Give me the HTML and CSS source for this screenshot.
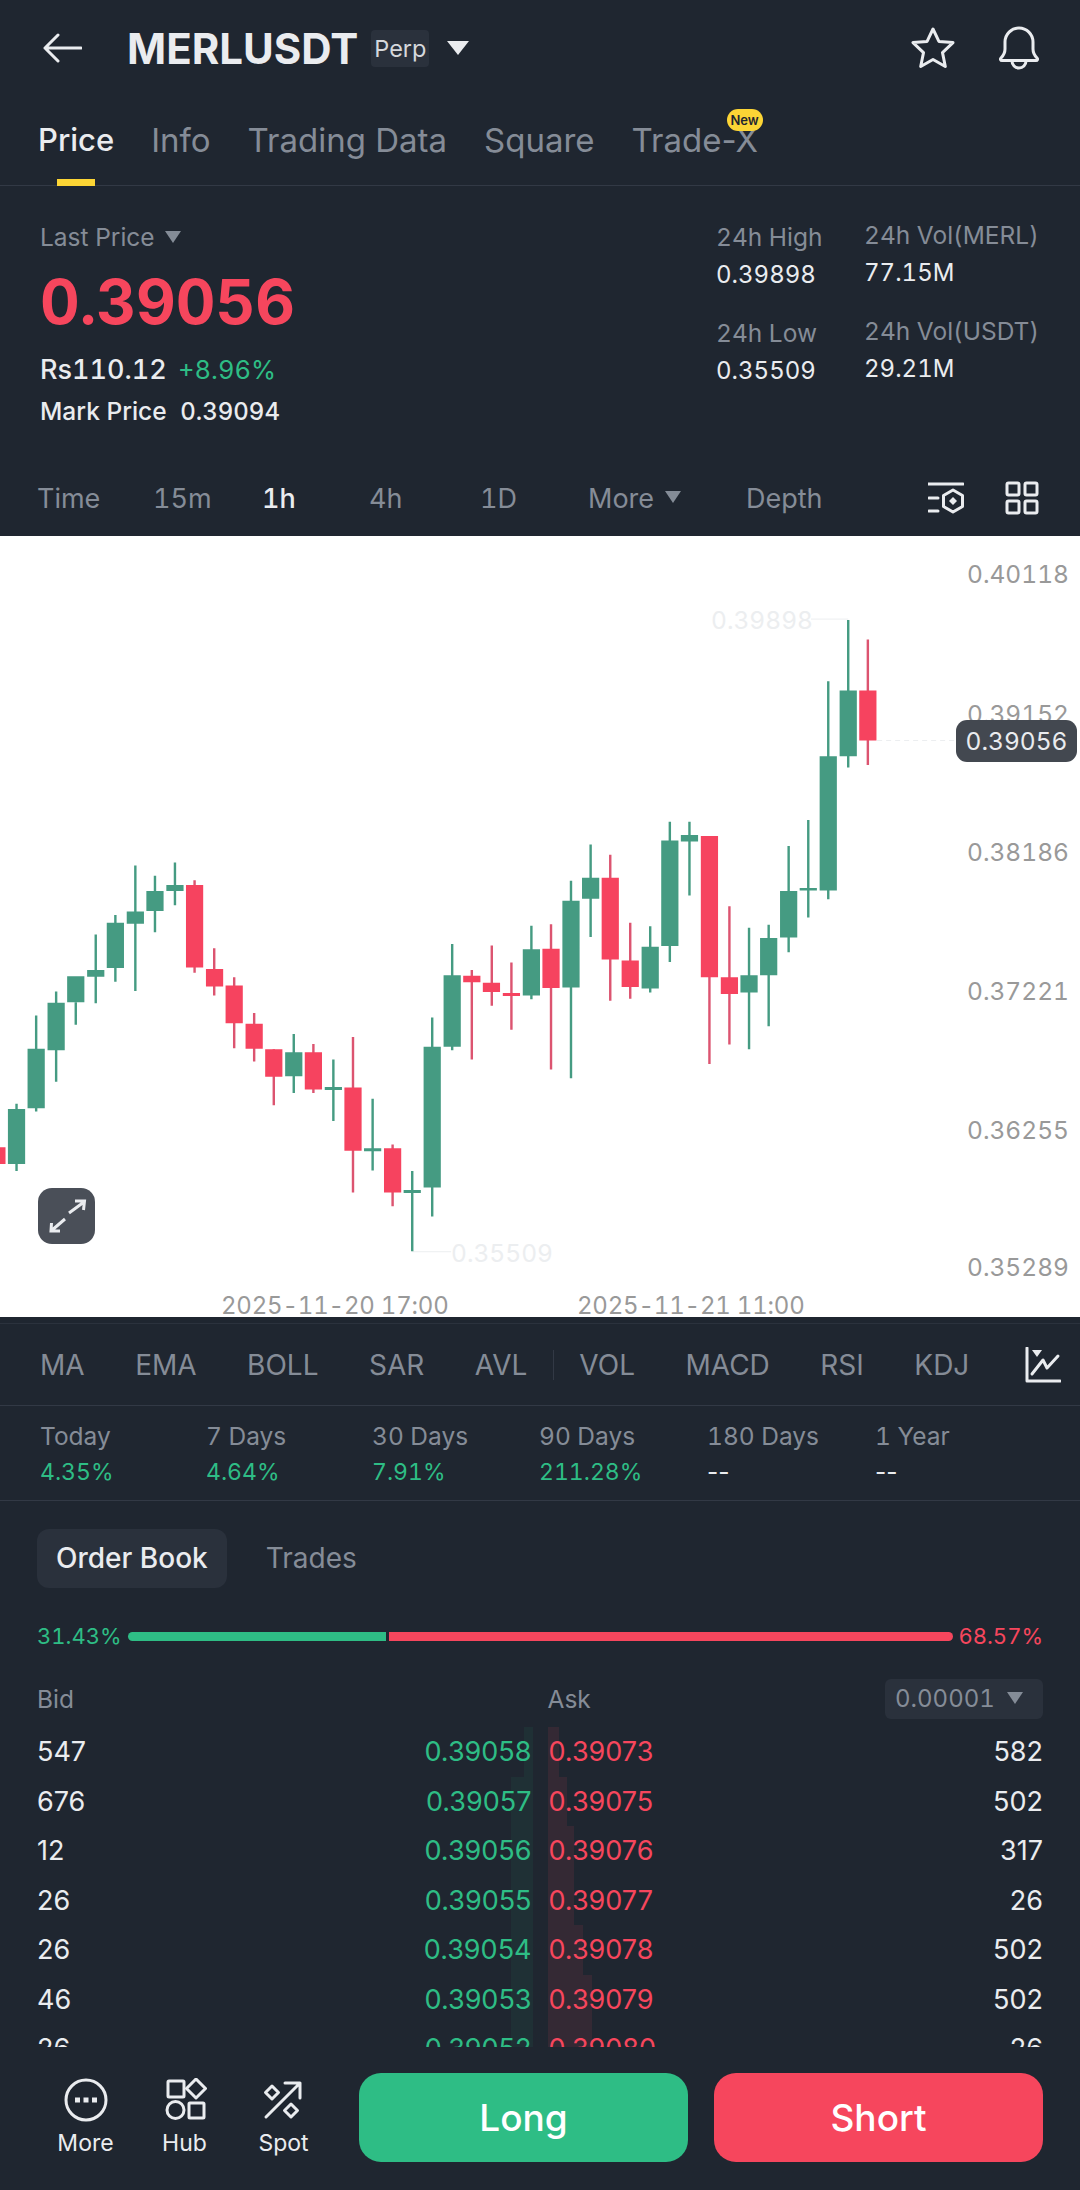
FILE: index.html
```html
<!DOCTYPE html>
<html lang="en">
<head>
  <meta charset="UTF-8" />
  <meta name="viewport" content="width=device-width, initial-scale=1.0"/>
  <title>MERLUSDT Perp</title>
  <link rel="stylesheet" href="styles.css">
</head>
<body>
  <header class="topbar">
    <svg class="icon back" width="40" height="30" viewBox="0 0 40 30"><path d="M39 15H3M16 2L3 15l13 13"/></svg>
    <span class="symbol">MERLUSDT</span>
    <span class="perp">Perp</span>
    <span class="tri tri-white"></span>
    <svg class="icon star" width="44" height="44" viewBox="0 0 44 44"><path d="M22 3l5.900 12.400 14.100 1.200-10.500 10 2.800 13.900L22 33.500 9.700 40.500l2.800-13.900L2 16.600l14.100-1.200z"/></svg>
    <svg class="icon bell" width="44" height="46" viewBox="0 0 44 46"><path d="M4 33c3-3 4-5 4-9v-7a14 14 0 0 1 28 0v7c0 4 1 6 4 9 1 1 .5 2.500-1 2.500H5c-1.500 0-2-1.500-1-2.500z"/><path d="M15 36a7 7 0 0 0 14 0"/></svg>
  </header>

  <nav class="tabs">
    <a class="tab active">Price</a>
    <a class="tab">Info</a>
    <a class="tab">Trading Data</a>
    <a class="tab">Square</a>
    <a class="tab">Trade-X<span class="new">New</span></a>
  </nav>

  <section class="summary">
    <div class="last">
      <div class="last-label">Last Price <span class="tri tri-grey"></span></div>
      <div class="last-price">0.39056</div>
      <div class="last-fiat">Rs110.12 <span class="green">+8.96%</span></div>
      <div class="last-mark">Mark Price <span class="mark-val">0.39094</span></div>
    </div>
    <div class="stats">
      <div class="stat-col">
        <p class="stat-label">24h High</p>
        <p class="stat-val">0.39898</p>
        <p class="stat-label lower">24h Low</p>
        <p class="stat-val">0.35509</p>
      </div>
      <div class="stat-col shift">
        <p class="stat-label">24h Vol(MERL)</p>
        <p class="stat-val">77.15M</p>
        <p class="stat-label lower">24h Vol(USDT)</p>
        <p class="stat-val">29.21M</p>
      </div>
    </div>
  </section>

  <div class="frames">
    <span>Time</span>
    <span>15m</span>
    <span class="on">1h</span>
    <span>4h</span>
    <span>1D</span>
    <span>More <i class="tri tri-grey"></i></span>
    <span>Depth</span>
    <svg class="icon frame-icon" width="36" height="34" viewBox="0 0 36 34"><path d="M0 3h35M1 17h9M1 30h9"/><path d="M25 9l9.500 5.500v11L25 31l-9.500-5.500v-11z"/><path class="solid" d="M25 16l4 4-4 4-4-4z"/></svg>
    <svg class="icon grid-icon" width="34" height="34" viewBox="0 0 34 34"><rect x="2" y="2" width="12" height="12" rx="1.500"/><rect x="20" y="2" width="12" height="12" rx="1.500"/><rect x="2" y="20" width="12" height="12" rx="1.500"/><rect x="20" y="20" width="12" height="12" rx="1.500"/></svg>
  </div>

  <section class="chart">
    <svg class="candles" width="1080" height="800" viewBox="0 0 3136 1568" preserveAspectRatio="none">
      <path class="guide" d="M2355 155H2463M1197 1395H1310"/>
      <path class="guide dashed" d="M2547 393H2776"/>
      <path class="wick up" d="M48 1105V1237M105 932V1120M163 885V1062M220 906V950M278 773V908M335 735V866M393 638V884M450 658V769M508 632V716M853 968V1084M968 1018V1139M1082 1095V1236M1197 1237V1394M1255 936V1326M1313 792V1000M1543 756V900M1658 668V1055M1715 597V778M1888 757V887M1945 552V827M2002 552V697M2175 760V998M2232 754V953M2290 600V808M2347 549V740M2405 277V704M2463 157V446"/>
      <path class="wick down" d="M565 667V848M622 800V893M680 857V996M738 927V1022M795 998V1108M910 988V1084M1025 974V1279M1140 1185V1306M1370 843V1018M1428 795V913M1485 828V960M1600 753V1038M1772 617V903M1830 750V899M2060 580V1027M2118 718V989M2520 195V441"/>
      <path class="body up" d="M23 1115h50v108h-50zM80 997h50v117h-50zM138 907h50v93h-50zM195 855h50v51h-50zM253 843h50v13h-50zM310 750h50v89h-50zM368 728h50v24h-50zM425 688h50v39h-50zM483 676h50v12h-50zM828 1004h50v47h-50zM943 1072h50v6h-50zM1057 1192h50v6h-50zM1172 1274h50v6h-50zM1230 993h50v276h-50zM1288 853h50v140h-50zM1518 802h50v91h-50zM1633 707h50v170h-50zM1690 662h50v41h-50zM1863 797h50v82h-50zM1920 589h50v207h-50zM1977 578h50v13h-50zM2150 853h50v34h-50zM2207 780h50v73h-50zM2265 688h50v91h-50zM2322 682h50v5h-50zM2380 424h50v263h-50zM2438 295h50v129h-50z"/>
      <path class="body down" d="M-34 1190h50v33h-50zM540 676h50v162h-50zM598 841h50v34h-50zM655 873h50v74h-50zM713 948h50v49h-50zM770 998h50v54h-50zM885 1004h50v73h-50zM1000 1073h50v124h-50zM1115 1192h50v87h-50zM1345 854h50v13h-50zM1402 868h50v18h-50zM1460 888h50v6h-50zM1575 801h50v77h-50zM1747 662h50v160h-50zM1805 824h50v52h-50zM2035 580h50v277h-50zM2093 857h50v33h-50zM2495 295h50v98h-50z"/>
    </svg>

    <span class="axis y-40118">0.40118</span>
    <span class="axis y-39152">0.39152</span>
    <span class="axis y-38186">0.38186</span>
    <span class="axis y-37221">0.37221</span>
    <span class="axis y-36255">0.36255</span>
    <span class="axis y-35289">0.35289</span>
    <span class="now-price">0.39056</span>
    <span class="peak peak-high">0.39898</span>
    <span class="peak peak-low">0.35509</span>
    <span class="date date-a">2025-11-20 17:00</span>
    <span class="date date-b">2025-11-21 11:00</span>

    <button class="expand">
      <svg width="57" height="56" viewBox="0 0 57 56"><path d="M31 25l15-11M37 13h9.500l-1 9M27 31L13 43M13.500 35L13 43h9"/></svg>
    </button>
  </section>

  <div class="indicators">
    <span>MA</span>
    <span>EMA</span>
    <span>BOLL</span>
    <span>SAR</span>
    <span>AVL</span>
    <i class="sep"></i>
    <span>VOL</span>
    <span>MACD</span>
    <span>RSI</span>
    <span>KDJ</span>
    <svg class="icon ind-icon" width="36" height="36" viewBox="0 0 36 36"><path d="M2 1v33h33"/><path d="M7 27l11-14 4 8 11-12"/><path class="solid" d="M7 3h10l-5 7z"/></svg>
  </div>

  <div class="periods">
    <div class="period"><p>Today</p><b class="green">4.35%</b></div>
    <div class="period"><p>7 Days</p><b class="green">4.64%</b></div>
    <div class="period"><p>30 Days</p><b class="green">7.91%</b></div>
    <div class="period"><p>90 Days</p><b class="green">211.28%</b></div>
    <div class="period"><p>180 Days</p><b class="none">--</b></div>
    <div class="period"><p>1 Year</p><b class="none">--</b></div>
  </div>

  <section class="book">
    <div class="book-tabs">
      <span class="book-tab active">Order Book</span>
      <span class="book-tab">Trades</span>
    </div>

    <div class="ratio">
      <span class="green">31.43%</span>
      <div class="ratio-bar">
        <i class="ratio-bid"></i>
        <i class="ratio-ask"></i>
      </div>
      <span class="red">68.57%</span>
    </div>

    <div class="book-head">
      <div class="half"><span>Bid</span></div>
      <div class="half">
        <span class="ask-label">Ask</span>
        <span class="tick">0.00001 <i class="tri tri-grey"></i></span>
      </div>
    </div>

    <div class="rows">
      <div class="row">
        <div class="half"><i class="depth depth-bid" style="width:9px"></i><span>547</span><span class="green">0.39058</span></div>
        <div class="half"><i class="depth depth-ask" style="width:11px"></i><span class="red">0.39073</span><span>582</span></div>
      </div>
      <div class="row">
        <div class="half"><i class="depth depth-bid" style="width:22px"></i><span>676</span><span class="green">0.39057</span></div>
        <div class="half"><i class="depth depth-ask" style="width:19px"></i><span class="red">0.39075</span><span>502</span></div>
      </div>
      <div class="row">
        <div class="half"><i class="depth depth-bid" style="width:22px"></i><span>12</span><span class="green">0.39056</span></div>
        <div class="half"><i class="depth depth-ask" style="width:26px"></i><span class="red">0.39076</span><span>317</span></div>
      </div>
      <div class="row">
        <div class="half"><i class="depth depth-bid" style="width:22px"></i><span>26</span><span class="green">0.39055</span></div>
        <div class="half"><i class="depth depth-ask" style="width:26px"></i><span class="red">0.39077</span><span>26</span></div>
      </div>
      <div class="row">
        <div class="half"><i class="depth depth-bid" style="width:22px"></i><span>26</span><span class="green">0.39054</span></div>
        <div class="half"><i class="depth depth-ask" style="width:35px"></i><span class="red">0.39078</span><span>502</span></div>
      </div>
      <div class="row">
        <div class="half"><i class="depth depth-bid" style="width:22px"></i><span>46</span><span class="green">0.39053</span></div>
        <div class="half"><i class="depth depth-ask" style="width:44px"></i><span class="red">0.39079</span><span>502</span></div>
      </div>
      <div class="row">
        <div class="half"><i class="depth depth-bid" style="width:22px"></i><span>26</span><span class="green">0.39052</span></div>
        <div class="half"><i class="depth depth-ask" style="width:44px"></i><span class="red">0.39080</span><span>26</span></div>
      </div>
    </div>
  </section>

  <footer class="actions">
    <div class="action">
      <svg class="icon" width="44" height="44" viewBox="0 0 44 44"><circle cx="22" cy="22" r="20"/><path class="solid" d="M11 19.500h5v5h-5zM19.500 19.500h5v5h-5zM28 19.500h5v5h-5z"/></svg>
      <span>More</span>
    </div>
    <div class="action">
      <svg class="icon" width="44" height="44" viewBox="0 0 44 44"><rect x="5" y="3" width="16" height="16" rx="1"/><path d="M33 1l9.500 9.500L33 20l-9.500-9.500z"/><circle cx="12.500" cy="32" r="8.500"/><rect x="26" y="25" width="15" height="15" rx="1"/></svg>
      <span>Hub</span>
    </div>
    <div class="action">
      <svg class="icon" width="44" height="44" viewBox="0 0 44 44"><path d="M4 39L38 5M23 5h15v15"/><path d="M10 8l6.500 6.500L10 21l-6.500-6.500zM29 26l6.500 6.500L29 39l-6.500-6.500z"/></svg>
      <span>Spot</span>
    </div>
    <button class="trade long">Long</button>
    <button class="trade short">Short</button>
  </footer>
</body>
</html>
```

FILE: styles.css
```css
* {
  box-sizing: border-box;
}

html,
body {
  margin: 0;
  padding: 0;
}

body {
  width: 1080px;
  height: 2190px;
  overflow: hidden;
  background: #1f2630;
  color: #eaecef;
  font-family: Inter, "Noto Sans", sans-serif;
  font-variant-numeric: tabular-nums;
  display: flex;
  flex-direction: column;
}

p {
  margin: 0;
}

i {
  font-style: normal;
}

.green {
  color: #2ebd85;
}

.red {
  color: #f6465d;
}

.icon {
  fill: none;
  stroke: #eaecef;
  stroke-width: 3;
  stroke-linejoin: round;
  stroke-linecap: round;
  flex: none;
}

.icon .solid {
  fill: #eaecef;
  stroke: none;
}

.tri {
  display: inline-block;
  width: 0;
  height: 0;
  border-style: solid;
  border-color: transparent;
  border-width: 12px 8px 0;
}

.tri-grey {
  border-top-color: #848c97;
}

.tri-white {
  border-width: 14px 11px 0;
  border-top-color: #eaecef;
}

/* header */
.topbar {
  height: 96px;
  padding: 0 39px 0 42px;
  display: flex;
  align-items: center;
}

.symbol {
  margin-left: 45px;
  font-size: 42px;
  font-weight: 700;
}

.perp {
  margin-left: 13px;
  height: 37px;
  line-height: 37px;
  padding: 0 3px;
  border-radius: 4px;
  background: #2a313c;
  color: #d5d8dc;
  font-size: 23.500px;
}

.topbar .tri {
  margin-left: 18px;
}

.star {
  margin-left: auto;
}

.bell {
  margin-left: 42px;
}

.tabs {
  height: 90px;
  padding: 28px 0 0 38px;
  display: flex;
  gap: 37px;
  border-bottom: 1px solid #323945;
}

.tab {
  position: relative;
  height: 32px;
  line-height: 32px;
  font-size: 33px;
  font-variant-numeric: normal;
  color: #858c97;
}

.tab.active {
  font-size: 31px;
  font-weight: 500;
  color: #eaecef;
}

.tab.active::after {
  content: "";
  position: absolute;
  left: 19px;
  top: 55px;
  width: 38px;
  height: 7px;
  background: #fcd535;
}

.new {
  position: absolute;
  left: 95px;
  top: -15px;
  width: 36px;
  height: 22px;
  line-height: 22px;
  border-radius: 11px;
  background: #fcd535;
  color: #1f2630;
  font-size: 13px;
  font-weight: 600;
  text-align: center;
}

/* price summary */
.summary {
  height: 274px;
  padding-top: 36px;
  display: flex;
  justify-content: space-between;
}

.last {
  padding-left: 40px;
}

.last-label {
  line-height: 30px;
  font-size: 24.500px;
  color: #858c97;
}

.last-label .tri {
  margin-left: 4px;
  vertical-align: 3px;
}

.last-price {
  margin-top: 15px;
  line-height: 70px;
  font-size: 61.500px;
  font-weight: 700;
  color: #f6465d;
}

.last-fiat {
  margin-top: 16px;
  line-height: 34px;
  font-size: 27px;
  font-weight: 500;
}

.last-fiat .green {
  font-size: 25.500px;
  font-weight: 400;
  margin-left: 4px;
}

.last-mark {
  margin-top: 9px;
  line-height: 30px;
  font-size: 24.500px;
  font-weight: 500;
}

.mark-val {
  margin-left: 7px;
  font-size: 24px;
}

.stats {
  width: 364px;
  display: flex;
}

.stat-col {
  width: 148px;
}

.stat-col.shift {
  margin-top: -2px;
  width: 216px;
}

.stat-label {
  line-height: 30px;
  font-size: 24.500px;
  color: #858c97;
}

.stat-label.lower {
  margin-top: 28px;
}

.stat-val {
  margin-top: 8px;
  line-height: 30px;
  font-size: 24px;
}

/* time frames */
.frames {
  height: 76px;
  padding-left: 37px;
  display: grid;
  grid-template-columns: 116px 109px 107px 111px 108px 158px 182px 77px 33px;
  align-items: center;
  font-size: 27px;
  color: #858c97;
}

.frames .on {
  color: #eaecef;
  font-weight: 500;
}

.frames .tri {
  margin-left: 4px;
  vertical-align: 5px;
}

/* chart */
.chart {
  position: relative;
  height: 781px;
  background: #fff;
  overflow: hidden;
  flex: none;
}

.candles {
  position: absolute;
  left: 0;
  top: 4px;
}

.wick {
  fill: none;
  stroke-width: 7;
}

.wick.up {
  stroke: #459b82;
}

.wick.down {
  stroke: #dc5470;
}

.body.up {
  fill: #459b82;
}

.body.down {
  fill: #f6435f;
}

.guide {
  fill: none;
  stroke: #eceef0;
  stroke-width: 1;
  vector-effect: non-scaling-stroke;
}

.guide.dashed {
  stroke-dasharray: 5 4;
}

.axis,
.now-price,
.peak,
.date {
  position: absolute;
  line-height: 30px;
  font-size: 24.500px;
  color: #999;
}

.axis {
  left: 967px;
}

.y-40118 { top: 23px; }
.y-39152 { top: 163px; }
.y-38186 { top: 301px; }
.y-37221 { top: 440px; }
.y-36255 { top: 579px; }
.y-35289 { top: 716px; }

.now-price {
  left: 956px;
  top: 184px;
  width: 121px;
  height: 42px;
  line-height: 42px;
  border-radius: 11px;
  background: #434850;
  color: #eaecef;
  text-align: center;
}

.peak {
  color: #eceef0;
}

.peak-high {
  left: 711px;
  top: 69px;
}

.peak-low {
  left: 451px;
  top: 702px;
}

.date {
  top: 755px;
  font-size: 24px;
  letter-spacing: -0.200px;
}

.date-a {
  left: 221px;
}

.date-b {
  left: 577px;
}

.expand {
  position: absolute;
  left: 38px;
  top: 652px;
  width: 57px;
  height: 56px;
  padding: 0;
  border: 0;
  border-radius: 14px;
  background: #4a4f58;
}

.expand svg {
  display: block;
  fill: none;
  stroke: #eaecef;
  stroke-width: 3;
}

/* indicators */
.indicators {
  height: 89px;
  padding: 8px 0 0 40px;
  display: flex;
  align-items: center;
  gap: 50.500px;
  border-bottom: 1px solid #323945;
  font-size: 28px;
  color: #858c97;
  position: relative;
}

.indicators::before {
  content: "";
  position: absolute;
  left: 0;
  right: 0;
  top: 6px;
  height: 1px;
  background: #2b323d;
}

.sep {
  width: 1px;
  height: 30px;
  margin: 0 -25px;
  background: #323945;
}

.ind-icon {
  position: absolute;
  left: 1025px;
  top: 30px;
}

.periods {
  height: 95px;
  padding: 15px 0 0 40px;
  display: grid;
  grid-template-columns: 166px 166px 167px 168px 168px 1fr;
  border-bottom: 1px solid #323945;
  font-size: 24.500px;
}

.period p {
  line-height: 30px;
  color: #858c97;
}

.period b {
  display: block;
  margin-top: 6px;
  line-height: 30px;
  font-size: 23px;
  font-weight: 400;
}

.period b.none {
  font-variant-numeric: normal;
  font-size: 24.500px;
}

/* order book */
.book {
  flex: 1;
  min-height: 0;
  display: flex;
  flex-direction: column;
  padding: 28px 37px 0;
  overflow: hidden;
}

.book-tabs {
  display: flex;
  gap: 39px;
  align-items: center;
}

.book-tab {
  height: 59px;
  line-height: 59px;
  font-size: 28px;
  color: #858c97;
}

.book-tab.active {
  padding: 0 19px;
  border-radius: 12px;
  background: #2a313c;
  color: #eaecef;
  font-weight: 500;
}

.ratio {
  margin-top: 33px;
  height: 30px;
  display: flex;
  align-items: center;
  justify-content: space-between;
  font-size: 22px;
}

.ratio-bar {
  width: 825px;
  display: flex;
  gap: 3px;
}

.ratio-bar i {
  height: 9px;
}

.ratio-bid {
  width: 258px;
  border-radius: 5px 0 0 5px;
  background: #2ebd85;
}

.ratio-ask {
  flex: 1;
  border-radius: 0 5px 5px 0;
  background: #f6465d;
}

.book-head {
  margin-top: 28px;
  height: 40px;
  display: grid;
  grid-template-columns: 1fr 1fr;
  gap: 19px;
  font-size: 24.500px;
  color: #858c97;
}

.half {
  position: relative;
  display: flex;
  align-items: center;
  justify-content: space-between;
}

.ask-label {
  margin-left: -2px;
}

.tick {
  width: 158px;
  height: 40px;
  line-height: 40px;
  padding-left: 10px;
  border-radius: 6px;
  background: #2a313c;
  font-size: 24px;
}

.tick .tri {
  margin-left: 6px;
  vertical-align: 3px;
}

.rows {
  margin-top: 8px;
  height: 320px;
  overflow: hidden;
}

.row {
  height: 49.500px;
  display: grid;
  grid-template-columns: 1fr 1fr;
  gap: 17px;
  font-size: 27px;
  font-variant-numeric: normal;
}

.row .half span {
  position: relative;
}

.depth {
  position: absolute;
  top: 0;
  bottom: 0;
}

.depth-bid {
  right: -1px;
  background: rgba(46, 189, 133, 0.07);
}

.depth-ask {
  left: -1px;
  background: rgba(246, 70, 93, 0.1);
}

/* bottom bar */
.actions {
  height: 142px;
  padding: 25px 37px 0 36px;
  display: flex;
  flex: none;
}

.action {
  width: 99px;
  display: flex;
  flex-direction: column;
  align-items: center;
  font-size: 23px;
}

.action span {
  margin-top: 6px;
  line-height: 30px;
}

.action .icon {
  margin-top: 5px;
}

.trade {
  width: 329px;
  height: 89px;
  border: 0;
  border-radius: 22px;
  color: #fff;
  font-family: inherit;
  font-size: 37px;
  font-weight: 500;
}

.trade.long {
  margin-left: 26px;
  background: #2ebd85;
}

.trade.short {
  margin-left: 26px;
  background: #f6465d;
}
```
